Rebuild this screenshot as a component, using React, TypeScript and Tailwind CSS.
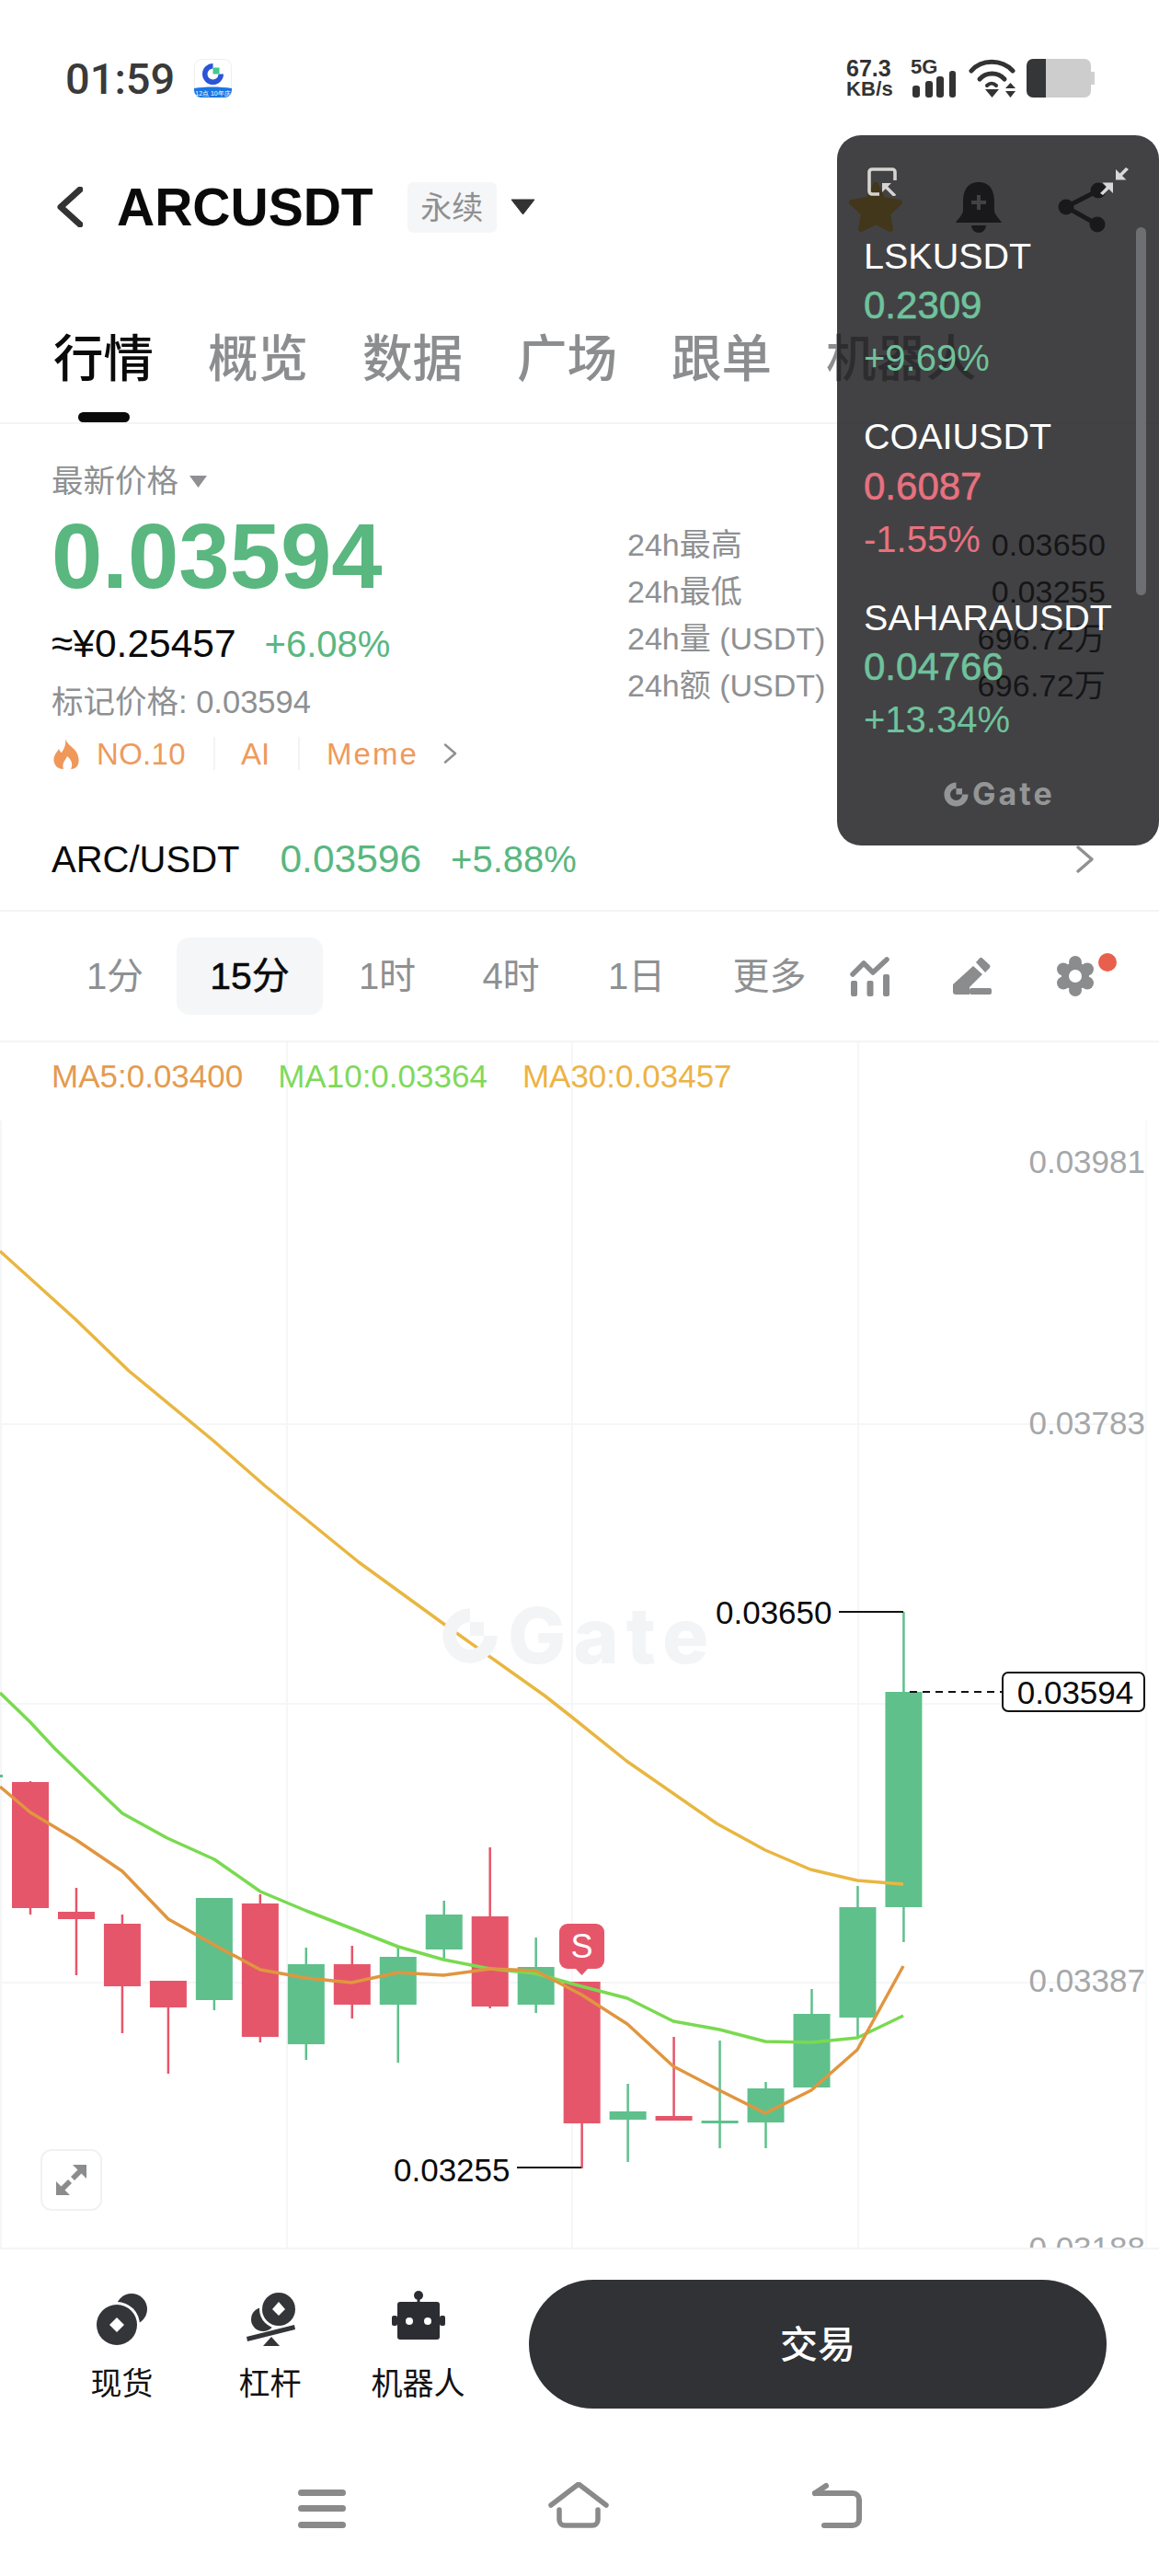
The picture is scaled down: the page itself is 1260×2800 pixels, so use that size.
const RED = "#e5566a";
const GREEN = "#5fc08c";

type Candle = [number, number, number, number, number]; // up, wickTop, wickBottom, bodyTop, bodyBottom

const candles: Candle[] = [
  [0, 1936, 2081, 1937, 2074],
  [0, 2052, 2147, 2078, 2086],
  [0, 2081, 2210, 2091, 2159],
  [0, 2153, 2254, 2153, 2182],
  [1, 2063, 2185, 2063, 2174],
  [0, 2059, 2220, 2069, 2214],
  [1, 2117, 2239, 2135, 2222],
  [0, 2115, 2194, 2135, 2179],
  [1, 2117, 2242, 2127, 2179],
  [1, 2066, 2129, 2081, 2119],
  [0, 2008, 2183, 2083, 2181],
  [1, 2106, 2188, 2138, 2179],
  [0, 2154, 2357, 2154, 2308],
  [1, 2265, 2350, 2295, 2304],
  [0, 2214, 2305, 2300, 2305],
  [1, 2218, 2335, 2305, 2308],
  [1, 2263, 2335, 2270, 2307],
  [1, 2162, 2269, 2189, 2269],
  [1, 2050, 2214, 2073, 2193],
  [1, 1752, 2111, 1839, 2073],
];

const ma30 =
  "0,1360 82,1434 140,1490 232,1566 288,1615 390,1698 485,1767 592,1843 620,1865 681,1914 779,1982 832,2011 881,2032 932,2044 982,2048";
const ma10 =
  "0,1840 33,1872 59,1900 92,1932 133,1971 182,1998 233,2021 283,2056 333,2077 382,2096 433,2116 482,2130 533,2140 582,2145 632,2159 682,2172 732,2197 782,2206 832,2219 882,2220 932,2215 982,2191";
const ma5 =
  "0,1942 33,1970 83,2000 133,2034 183,2086 233,2114 283,2141 333,2150 382,2155 433,2144 482,2147 533,2140 582,2142 632,2168 682,2200 732,2246 782,2272 832,2297 882,2272 932,2228 982,2137";

function GateMark({ size, color, square }: { size: number; color: string; square?: string }) {
  return (
    <svg width={size} height={size} viewBox="0 0 40 40" className="shrink-0">
      <path
        d="M20 2 A18 18 0 1 0 38 20 H29 A9 9 0 1 1 20 11 Z"
        fill={color}
      />
      <rect x="20" y="11" width="9" height="9" fill={square ?? color} />
    </svg>
  );
}

function StatusBar() {
  return (
    <div className="h-[130px] flex justify-between items-start pl-[71px] pr-[70px] pt-[64px]">
      <div className="flex items-center h-[42px]">
        <span className="w-[119px] text-[47px] leading-none font-medium text-[#3a3a3a] [font-family:Roboto,sans-serif]">01:59</span>
        <svg width="41" height="42" viewBox="0 0 41 42" className="ml-[21px]">
          <rect x="0.5" y="0.5" width="40" height="41" rx="8" fill="#fff" stroke="#eceef0" />
          <path d="M20.5 5 A11.5 11.5 0 1 0 32 16.5 H26.5 A6 6 0 1 1 20.5 10.5 Z" fill="#2b55d6" />
          <rect x="20.5" y="9.5" width="7" height="7" fill="#43c98f" />
          <path d="M0 32 C12 30 28 30 41 32 V34 A8 8 0 0 1 33 42 H8 A8 8 0 0 1 0 34 Z" fill="#1a76e3" />
          <text x="20.5" y="40" textAnchor="middle" fontSize="7" fill="#fff" fontFamily="Liberation Sans">12点 10年庆</text>
        </svg>
      </div>
      <div className="flex items-start text-[#333]">
        <div className="w-[52px] h-[42px] flex flex-col justify-between font-bold leading-none">
          <span className="text-[25px] h-[20px] leading-[20px]">67.3</span>
          <span className="text-[22px] h-[18px] leading-[18px] tracking-[0.2px]">KB/s</span>
        </div>
        <div className="relative w-[50px] h-[42px] ml-[18px]">
          <span className="absolute left-0 top-0 text-[22px] leading-[18px] font-bold">5G</span>
          <svg width="50" height="42" viewBox="0 0 50 42" fill="#333">
            <rect x="2" y="29" width="8" height="13" rx="3" />
            <rect x="16" y="24" width="8" height="18" rx="3" />
            <rect x="28" y="19" width="8" height="23" rx="3" />
            <rect x="42" y="13" width="7" height="29" rx="3" />
          </svg>
        </div>
        <svg width="52" height="42" viewBox="0 0 52 42" className="ml-[13px]" fill="none" stroke="#333" strokeWidth="5" strokeLinecap="round">
          <path d="M3 13 C14 0 36 0 48 13" />
          <path d="M12 22 C19 14 32 14 39 22" />
          <path d="M20 29 C23 26 27 26 30 29" strokeWidth="4" />
          <path d="M18 33 H33 L25.5 42 Z" fill="#333" stroke="none" />
          <path d="M40 32 L45.5 26 L51 32 Z M40 35 H51 L45.5 42 Z" fill="#333" stroke="none" />
        </svg>
        <svg width="74" height="42" viewBox="0 0 74 42" className="ml-[11px]">
          <path d="M70 14 H74 V28 H70 Z" fill="#d0d0d0" />
          <path d="M21 0 H63 A7 7 0 0 1 70 7 V35 A7 7 0 0 1 63 42 H21 Z" fill="#cdcdcd" />
          <path d="M21 0 V42 H7 A7 7 0 0 1 0 35 V7 A7 7 0 0 1 7 0 Z" fill="#353638" />
        </svg>
      </div>
    </div>
  );
}

function Header() {
  return (
    <div className="h-[190px] flex items-center pl-[62px] pr-[57px]">
      <svg width="28" height="44" viewBox="0 0 28 44" fill="none" stroke="#333" strokeWidth="7" strokeLinecap="round" strokeLinejoin="round">
        <path d="M25 3 L4 22 L25 41" />
      </svg>
      <span className="ml-[37px] text-[57px] leading-none font-bold text-[#0a0a0a]">ARCUSDT</span>
      <span className="ml-[37px] w-[97px] h-[55px] rounded-[6px] bg-[#f5f6f7] flex items-center justify-center pt-[2px] text-[34px] leading-none text-[#8e9092]">永续</span>
      <svg width="27" height="18" viewBox="0 0 27 18" className="ml-[15px]">
        <path d="M1 1 H26 L13.5 17 Z" fill="#333" stroke="#333" strokeLinejoin="round" />
      </svg>
      <div className="ml-auto flex items-center">
        <svg width="60" height="56" viewBox="0 0 60 56">
          <path d="M30 4 L38 20 L56 23 L43 35 L46 52 L30 44 L14 52 L17 35 L4 23 L22 20 Z" fill="#ffbc1f" stroke="#ffbc1f" strokeWidth="6" strokeLinejoin="round" />
        </svg>
        <svg width="50" height="55" viewBox="0 0 50 55" className="ml-[57px]" fill="#1c1d20">
          <path d="M25 0 C12 0 8 10 8 22 V30 C8 36 2 40 0 44 H50 C48 40 42 36 42 30 V22 C42 10 38 0 25 0 Z" />
          <path d="M17 47 H33 A8 8 0 0 1 17 47 Z" />
          <path d="M23 14 H27 V20 H33 V24 H27 V30 H23 V24 H17 V20 H23 Z" fill="#fff" />
        </svg>
        <svg width="53" height="55" viewBox="0 0 53 55" className="ml-[61px]" fill="#1c1d20" stroke="#1c1d20" strokeWidth="5">
          <path d="M9 27 L44 9 M9 27 L43 46" fill="none" />
          <circle cx="9" cy="27" r="6" />
          <circle cx="44" cy="9" r="6" />
          <circle cx="43" cy="46" r="6" />
        </svg>
      </div>
    </div>
  );
}

function Tabs() {
  const tabs = ["行情", "概览", "数据", "广场", "跟单", "机器人"];
  return (
    <div className="h-[141px] border-b-2 border-[#f3f4f5] flex pl-[58px] gap-[59px]">
      {tabs.map((t, i) => (
        <div key={t} className="h-[139px] flex flex-col items-center justify-end">
          <span className={`text-[54.5px] leading-none font-medium whitespace-nowrap ${i === 0 ? "text-[#0a0a0a]" : "text-[#8b8d8f]"}`}>{t}</span>
          <span className={`mt-[30px] w-[56px] h-[11px] rounded-full ${i === 0 ? "bg-[#0a0a0a]" : "bg-transparent"}`} />
        </div>
      ))}
    </div>
  );
}

function Chevron({ w, h, className }: { w: number; h: number; className?: string }) {
  return (
    <svg width={w} height={h} viewBox="0 0 19 30" className={className} fill="none" stroke="#8e9092" strokeWidth="3.4" strokeLinecap="round" strokeLinejoin="round">
      <path d="M2 2 L17 15 L2 28" />
    </svg>
  );
}

function Market() {
  const stats = [
    ["24h最高", "0.03650"],
    ["24h最低", "0.03255"],
    ["24h量 (USDT)", "696.72万"],
    ["24h额 (USDT)", "696.72万"],
  ];
  return (
    <div className="h-[530px] border-b-2 border-[#f3f4f5] flex flex-col">
      <div className="flex">
        <div className="w-[682px] pl-[56px] pt-[44px]">
          <div className="h-[36px] flex items-center">
            <span className="text-[34.5px] leading-none text-[#8e9092]">最新价格</span>
            <svg width="19" height="13" viewBox="0 0 19 13" className="ml-[12px]">
              <path d="M0 0 H19 L9.5 13 Z" fill="#8e9092" />
            </svg>
          </div>
          <div className="mt-[14px] h-[100px] flex items-center text-[99.5px] leading-none font-bold text-[#59b77f]">0.03594</div>
          <div className="mt-[23px] h-[44px] flex items-center">
            <span className="text-[42.5px] leading-none text-[#0a0a0a]">≈¥0.25457</span>
            <span className="ml-[31px] text-[40px] leading-none text-[#59b77f]">+6.08%</span>
          </div>
          <div className="mt-[21px] h-[40px] flex items-center text-[34.5px] leading-none text-[#8e9092]">标记价格: 0.03594</div>
          <div className="mt-[16px] h-[40px] flex items-center text-[33px] leading-none text-[#ee9a5c]">
            <svg width="29" height="33" viewBox="0 0 29 33" className="ml-[2px]">
              <path d="M13 0 C15 6 20 8 24 13 C29 19 30 33 19 33 C22 27 19 22 15 19 C13 24 9 26 11 33 C2 33 -2 24 2 17 C3 15 5 13 6 11 C7 13 8 15 9 15 C12 11 14 6 13 0 Z" fill="#f0975a" />
            </svg>
            <span className="ml-[18px] tracking-[0.3px]">NO.10</span>
            <span className="ml-[30px] w-[2px] h-[36px] bg-[#f3f3f3]" />
            <span className="ml-[28px]">AI</span>
            <span className="ml-[31px] w-[2px] h-[36px] bg-[#f3f3f3]" />
            <span className="ml-[29px] tracking-[2px]">Meme</span>
            <Chevron w={15} h={22} className="ml-[27px]" />
          </div>
        </div>
        <div className="w-[520px] pt-[105px] flex flex-col">
          {stats.map(([k, v]) => (
            <div key={k} className="h-[51px] flex items-center justify-between text-[34px] leading-none">
              <span className="text-[#8e9092]">{k}</span>
              <span className="text-[#0a0a0a] tracking-[0.2px]">{v}</span>
            </div>
          ))}
        </div>
      </div>
      <div className="mt-[65px] h-[60px] flex items-center pl-[56px]">
        <span className="text-[40px] leading-none text-[#0a0a0a]">ARC/USDT</span>
        <span className="ml-[44px] text-[42.5px] leading-none text-[#59b77f]">0.03596</span>
        <span className="ml-[32px] text-[40px] leading-none text-[#59b77f]">+5.88%</span>
        <Chevron w={19} h={30} className="ml-auto mr-[71px]" />
      </div>
    </div>
  );
}

function TimeRow() {
  return (
    <div className="h-[142px] border-b-2 border-[#f3f4f5] flex items-center pl-[93px] text-[40px] leading-none text-[#8e9092]">
      <span className="w-[64px] text-center whitespace-nowrap">1分</span>
      <span className="ml-[35px] w-[159px] h-[84px] rounded-[14px] bg-[#f5f6f7] flex items-center justify-center text-[41px] text-[#0a0a0a] [-webkit-text-stroke:0.5px]">15分</span>
      <span className="ml-[38px] w-[64px] text-center whitespace-nowrap">1时</span>
      <span className="ml-[69px] w-[67px] text-center whitespace-nowrap">4时</span>
      <span className="ml-[72px] w-[60px] text-center whitespace-nowrap">1日</span>
      <span className="ml-[75px] w-[81px] text-center whitespace-nowrap">更多</span>
      <svg width="43" height="44" viewBox="0 0 43 44" className="ml-[47px]" fill="#8a8c8e">
        <path d="M3 20 L15 8 L25 18 L40 4" fill="none" stroke="#8a8c8e" strokeWidth="5.5" strokeLinecap="round" strokeLinejoin="round" />
        <rect x="1" y="27" width="7" height="17" rx="2" />
        <rect x="18.5" y="27" width="7" height="17" rx="2" />
        <rect x="36" y="20" width="7" height="24" rx="2" />
      </svg>
      <svg width="42" height="42" viewBox="0 0 42 42" className="ml-[69px]" fill="#8a8c8e">
        <path d="M0 30 L22 10 L32 19 L18 33 V41 H3 A3 3 0 0 1 0 38 Z" />
        <rect x="18" y="34" width="24" height="7" rx="2" />
        <path d="M25 6 L29 1.5 Q30 0 32 1.5 L40 9 Q41 10.5 40 12 L35 17 Z" />
      </svg>
      <div className="relative ml-[70px] w-[42px] h-[44px]">
        <svg width="42" height="44" viewBox="0 0 42 44" fill="#8a8c8e">
          <circle cx="21" cy="22" r="15" />
          {[0, 60, 120, 180, 240, 300].map((a) => (
            <circle key={a} cx={21 + 15 * Math.sin((a * Math.PI) / 180)} cy={22 - 15 * Math.cos((a * Math.PI) / 180)} r="7" />
          ))}
          <circle cx="21" cy="22" r="7" fill="#fff" />
        </svg>
        <span className="absolute left-[46px] top-[-3px] w-[20px] h-[20px] rounded-full bg-[#e8604c]" />
      </div>
    </div>
  );
}

function Chart() {
  return (
    <div className="relative h-[1312px] border-b-2 border-[#f3f4f5] overflow-hidden">
      <svg width="1260" height="1310" viewBox="0 1133 1260 1310" className="absolute left-0 top-0">
        <g stroke="#f5f6f7" strokeWidth="2" fill="none">
          <path d="M1 1218 V2443 M312 1133 V2443 M622 1133 V2443 M933 1133 V2443" />
          <path d="M0 1548 H1246 M0 1852 H1246 M0 2155 H1246" />
          <path d="M1246 1218 V2443" stroke="#f8f9f9" />
        </g>
        <rect x="0" y="1929" width="3" height="3" fill={GREEN} />
        {candles.map(([up, wt, wb, bt, bb], i) => {
          const cx = 33 + i * 49.97;
          const c = up ? GREEN : RED;
          return (
            <g key={i} fill={c}>
              <rect x={cx - 1.25} y={wt} width="2.5" height={wb - wt} />
              <rect x={cx - 20} y={bt} width="40" height={bb - bt} />
            </g>
          );
        })}
        <polyline points={ma30} fill="none" stroke="#e9b640" strokeWidth="3.5" strokeLinejoin="round" />
        <polyline points={ma10} fill="none" stroke="#79da50" strokeWidth="3.5" strokeLinejoin="round" />
        <polyline points={ma5} fill="none" stroke="#e0963f" strokeWidth="3.5" strokeLinejoin="round" />
        <path d="M912 1752 H982 M562 2356 H632" stroke="#111" strokeWidth="2" fill="none" />
        <path d="M989 1839 H1089" stroke="#111" strokeWidth="2" strokeDasharray="8 6" fill="none" />
        <path d="M625 2139 H640 L632.5 2147 Z" fill={RED} />
      </svg>

      <div className="relative flex pl-[56px] pt-[19px] text-[35px] leading-[35px] whitespace-nowrap">
        <span className="text-[#e49b4f]">MA5:0.03400</span>
        <span className="ml-[38px] text-[#7fd95b]">MA10:0.03364</span>
        <span className="ml-[38px] text-[#edb345]">MA30:0.03457</span>
      </div>

      <div className="absolute left-[478px] top-[603px] flex items-center gap-[8px]">
        <GateMark size={66} color="#f3f4f5" />
        <span className="text-[84px] leading-none font-extrabold tracking-[8px] text-[#f3f4f5] [font-family:Inter,sans-serif]">Gate</span>
      </div>

      <span className="absolute right-[15px] top-[112px] text-[35px] leading-none text-[#a5a7a9]">0.03981</span>
      <span className="absolute right-[15px] top-[396px] text-[35px] leading-none text-[#a5a7a9]">0.03783</span>
      <span className="absolute right-[15px] top-[1002px] text-[35px] leading-none text-[#a5a7a9]">0.03387</span>
      <span className="absolute right-[15px] top-[1293px] text-[35px] leading-none text-[#a5a7a9]">0.03188</span>

      <span className="absolute left-[778px] top-[602px] text-[35px] leading-none text-[#0a0a0a]">0.03650</span>
      <span className="absolute left-[428px] top-[1208px] text-[35px] leading-none text-[#0a0a0a]">0.03255</span>
      <span className="absolute left-[1089px] top-[684px] w-[156px] h-[44px] rounded-[7px] border-2 border-[#111] bg-white flex items-center justify-center pl-[4px] text-[35px] leading-none text-[#0a0a0a]">0.03594</span>

      <span className="absolute left-[608px] top-[958px] w-[49px] h-[49px] rounded-[9px] bg-[#e5566a] flex items-center justify-center text-[36px] leading-none text-white">S</span>

      <div className="absolute left-[44px] top-[1203px] w-[67px] h-[67px] rounded-[12px] border-2 border-[#f0f1f2] bg-white flex items-center justify-center">
        <svg width="33" height="33" viewBox="0 0 33 33" fill="#8a8c8e">
          <path d="M18 0 H33 V15 L27.5 9.5 L20 17 L16 13 L23.5 5.5 Z" />
          <path d="M15 33 H0 V18 L5.5 23.5 L13 16 L17 20 L9.5 27.5 Z" />
        </svg>
      </div>
    </div>
  );
}

function BottomBar() {
  return (
    <div className="flex pt-[33px] pl-[52px]">
      <div className="w-[161px] pt-[12px] flex flex-col items-center">
        <svg width="55" height="60" viewBox="0 0 55 60" fill="#333538">
          <circle cx="38" cy="20" r="17" />
          <circle cx="22" cy="37" r="25" fill="#fff" />
          <circle cx="22" cy="37" r="22" />
          <path d="M22 29 L30 37 L22 45 L14 37 Z" fill="#fff" />
        </svg>
        <span className="mt-[23px] h-[36px] flex items-center text-[34px] leading-none text-[#111]">现货</span>
      </div>
      <div className="w-[161px] pt-[12px] flex flex-col items-center">
        <svg width="56" height="60" viewBox="0 0 56 60" fill="#333538">
          <circle cx="20" cy="31" r="13" />
          <circle cx="37" cy="20" r="21" fill="#fff" />
          <circle cx="37" cy="20" r="18" />
          <path d="M37 12 L44 20 L37 27 L30 20 Z" fill="#fff" />
          <path d="M2 50 L54 37 L55 42 L3 55 Z" />
          <path d="M20 60 H38 L29 50 Z" />
        </svg>
        <span className="mt-[23px] h-[36px] flex items-center text-[34px] leading-none text-[#111]">杠杆</span>
      </div>
      <div className="w-[161px] pt-[12px] flex flex-col items-center">
        <svg width="58" height="57" viewBox="0 0 58 57" className="mb-[3px]" fill="#2b2d32">
          <circle cx="29" cy="5" r="5" />
          <rect x="27.5" y="6" width="3" height="8" />
          <rect x="6" y="12" width="46" height="41" rx="3" />
          <rect x="0" y="27" width="6" height="11" rx="2" />
          <rect x="52" y="27" width="6" height="11" rx="2" />
          <circle cx="19" cy="33" r="4" fill="#fff" />
          <circle cx="39" cy="33" r="4" fill="#fff" />
        </svg>
        <span className="mt-[23px] h-[36px] flex items-center text-[34px] leading-none text-[#111] whitespace-nowrap">机器人</span>
      </div>
      <button className="ml-[40px] w-[628px] h-[140px] rounded-full bg-[#303236] text-white text-[41px] leading-none font-medium flex items-center justify-center pt-[2px]">交易</button>
    </div>
  );
}

function NavBar() {
  return (
    <div className="mt-[80px] h-[50px] flex justify-between items-start pl-[324px] pr-[323px]">
      <svg width="52" height="50" viewBox="0 0 52 50" fill="#8a8a8a">
        <rect y="8" width="52" height="7" rx="3.5" />
        <rect y="25" width="52" height="7" rx="3.5" />
        <rect y="43" width="52" height="7" rx="3.5" />
      </svg>
      <svg width="66" height="50" viewBox="0 0 66 50" fill="none" stroke="#8a8a8a" strokeWidth="5.5" strokeLinecap="round" strokeLinejoin="round">
        <path d="M3 25 L33 2 L63 25" />
        <path d="M12 30 V41 A6 6 0 0 0 18 47 H48 A6 6 0 0 0 54 41 V30" />
      </svg>
      <svg width="55" height="50" viewBox="0 0 55 50" fill="none" stroke="#8a8a8a" strokeWidth="6" strokeLinecap="round" strokeLinejoin="round">
        <path d="M4 12 L16 4" />
        <path d="M4 12 H45 A7 7 0 0 1 52 19 V40 A7 7 0 0 1 45 47 H14" />
      </svg>
    </div>
  );
}

function PanelItem({ name, price, pct, up }: { name: string; price: string; pct: string; up: boolean }) {
  const color = up ? "text-[#6fc29c]" : "text-[#e8717f]";
  return (
    <div className="h-[196.5px] whitespace-nowrap">
      <div className="h-[58px] flex items-center text-[39.5px] leading-none text-white">{name}</div>
      <div className={`h-[49px] flex items-center text-[42px] leading-none [-webkit-text-stroke:0.6px] ${color}`}>{price}</div>
      <div className={`h-[65px] flex items-center text-[40px] leading-none ${color}`}>{pct}</div>
    </div>
  );
}

function FloatingPanel() {
  return (
    <div className="absolute left-[910px] top-[147px] w-[350px] h-[772px] rounded-[26px] bg-[#18191b]/[0.82] z-10 overflow-hidden">
      <div className="h-[102.5px] flex justify-between items-start px-[33px] pt-[35px]">
        <svg width="32" height="31" viewBox="0 0 32 31" fill="none" stroke="#d6d4d0" strokeWidth="3.6">
          <path d="M13 29 H5 A3 3 0 0 1 2 26 V5 A3 3 0 0 1 5 2 H27 A3 3 0 0 1 30 5 V14" />
          <path d="M18 19 L30 31" strokeWidth="3.4" stroke="#d6d4d0" />
          <path d="M16 17 H26 L16 27 Z" fill="#d6d4d0" stroke="none" />
        </svg>
        <svg width="31" height="30" viewBox="0 0 31 30" fill="#d8d8d8">
          <path d="M17 2 V13.5 H28.5 L24 9 L31 2 L28 0 L21.5 6.5 Z" />
          <path d="M14 28 V16.5 H2.5 L7 21 L0 28 L3 30 L9.5 23.5 Z" />
        </svg>
      </div>
      <div className="pl-[29px]">
        <PanelItem name="LSKUSDT" price="0.2309" pct="+9.69%" up />
        <PanelItem name="COAIUSDT" price="0.6087" pct="-1.55%" up={false} />
        <PanelItem name="SAHARAUSDT" price="0.04766" pct="+13.34%" up />
      </div>
      <div className="mt-[10px] ml-[115px] h-[28px] flex items-center gap-[3px]">
        <GateMark size={29} color="#949596" />
        <span className="text-[34px] leading-none font-bold tracking-[3px] text-[#949596] [font-family:Inter,sans-serif]">Gate</span>
      </div>
      <div className="absolute left-[325px] top-[100px] w-[11px] h-[400px] rounded-full bg-[#6e6f72]" />
    </div>
  );
}

export default function App() {
  return (
    <div className="relative w-[1260px] h-[2800px] bg-white overflow-hidden [font-family:'Liberation_Sans','Noto_Sans_CJK_SC',sans-serif]">
      <StatusBar />
      <Header />
      <Tabs />
      <Market />
      <TimeRow />
      <Chart />
      <BottomBar />
      <NavBar />
      <FloatingPanel />
    </div>
  );
}
